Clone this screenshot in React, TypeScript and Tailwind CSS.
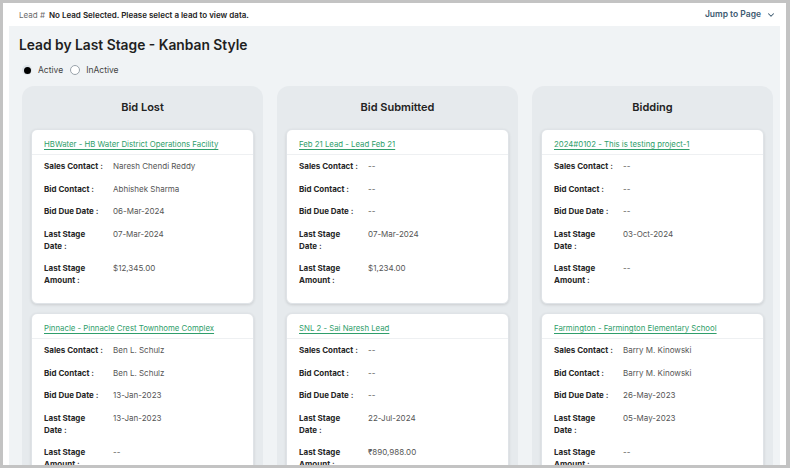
import { ChevronDown } from "lucide-react";

interface Lead {
  title: string;
  sales: string;
  bid: string;
  due: string;
  lastDate: string;
  amount: string;
}

const columns: { name: string; leads: Lead[] }[] = [
  {
    name: "Bid Lost",
    leads: [
      {
        title: "HBWater - HB Water District Operations Facility",
        sales: "Naresh Chendi Reddy",
        bid: "Abhishek Sharma",
        due: "06-Mar-2024",
        lastDate: "07-Mar-2024",
        amount: "$12,345.00",
      },
      {
        title: "Pinnacle - Pinnacle Crest Townhome Complex",
        sales: "Ben L. Schulz",
        bid: "Ben L. Schulz",
        due: "13-Jan-2023",
        lastDate: "13-Jan-2023",
        amount: "--",
      },
    ],
  },
  {
    name: "Bid Submitted",
    leads: [
      {
        title: "Feb 21 Lead - Lead Feb 21",
        sales: "--",
        bid: "--",
        due: "--",
        lastDate: "07-Mar-2024",
        amount: "$1,234.00",
      },
      {
        title: "SNL 2 - Sai Naresh Lead",
        sales: "--",
        bid: "--",
        due: "--",
        lastDate: "22-Jul-2024",
        amount: "₹890,988.00",
      },
    ],
  },
  {
    name: "Bidding",
    leads: [
      {
        title: "2024#0102 - This is testing project-1",
        sales: "--",
        bid: "--",
        due: "--",
        lastDate: "03-Oct-2024",
        amount: "--",
      },
      {
        title: "Farmington - Farmington Elementary School",
        sales: "Barry M. Kinowski",
        bid: "Barry M. Kinowski",
        due: "26-May-2023",
        lastDate: "05-May-2023",
        amount: "--",
      },
    ],
  },
];

function LeadCard({ lead }: { lead: Lead }) {
  // nbsp keeps the colon with its last word, so "Date :" wraps together
  const rows: [string, string][] = [
    ["Sales Contact\u00a0:", lead.sales],
    ["Bid Contact\u00a0:", lead.bid],
    ["Bid Due Date\u00a0:", lead.due],
    ["Last Stage Date\u00a0:", lead.lastDate],
    ["Last Stage Amount\u00a0:", lead.amount],
  ];
  return (
    <div className="bg-white rounded-[6px] border border-[#dfe3e7] shadow-[0_1px_3px_rgba(0,0,0,0.12)]">
      <div className="px-[12px] pt-[9px] pb-[5px] border-b border-[#eef0f2] text-[7.8px] leading-[10px]">
        <a className="text-[#2f9e6b] underline underline-offset-[1.5px] cursor-pointer">
          {lead.title}
        </a>
      </div>
      <div className="px-[12px] pt-[5px] pb-[17px] grid grid-cols-[62px_1fr] gap-x-[7px] gap-y-[10.5px] text-[8px] leading-[12px]">
        {rows.map(([label, value]) => (
          <div key={label} className="contents">
            <div className="font-bold text-[#262626]">{label}</div>
            <div className="text-[#555]">{value}</div>
          </div>
        ))}
      </div>
    </div>
  );
}

export default function App() {
  return (
    <div
      className="h-[468px] w-[790px] bg-[#c3c3c3] pt-[3px] pl-[3px] pr-[4px] pb-[3px] overflow-hidden"
      style={{ fontFamily: "Inter, 'Noto Sans', sans-serif" }}
    >
      <div className="h-full bg-white px-[6px] flex flex-col overflow-hidden">
        <div className="h-[23px] shrink-0 flex items-center justify-between pl-[10px] pr-[4px]">
          <div className="flex items-center gap-[4px] text-[8px]">
            <span className="text-[#6b6b6b]">Lead #</span>
            <span className="font-semibold text-[#222]">
              No Lead Selected. Please select a lead to view data.
            </span>
          </div>
          <div className="flex items-center gap-[5px] text-[8.5px] font-semibold text-[#3d5a70]">
            <span>Jump to Page</span>
            <ChevronDown size={10} strokeWidth={2.5} />
          </div>
        </div>
        <div className="flex-1 bg-[#f0f3f5] pl-[13px] pr-[7px] overflow-hidden">
          <h1 className="-ml-[3px] pt-[9px] text-[13.8px] leading-[20px] font-semibold text-[#1f1f1f]">
            Lead by Last Stage - Kanban Style
          </h1>
          <div className="mt-[9px] flex items-center text-[8.5px] text-[#444] h-[12px]">
            <span className="w-[10px] h-[10px] rounded-full bg-[#dfe5ea] flex items-center justify-center">
              <span className="w-[7px] h-[7px] rounded-full bg-black" />
            </span>
            <span className="ml-[6px]">Active</span>
            <span className="ml-[7px] w-[10px] h-[10px] rounded-full border border-[#9aa3ab] bg-white" />
            <span className="ml-[6px]">InActive</span>
          </div>
          <div className="mt-[10px] grid grid-cols-3 gap-[14px]">
            {columns.map((col) => (
              <div key={col.name} className="bg-[#e6eaed] rounded-[12px] px-[9px] pb-[9px]">
                <div className="h-[43px] flex items-center justify-center text-[11px] font-semibold text-[#222]">
                  {col.name}
                </div>
                <div className="flex flex-col gap-[9px]">
                  {col.leads.map((lead) => (
                    <LeadCard key={lead.title} lead={lead} />
                  ))}
                </div>
              </div>
            ))}
          </div>
        </div>
      </div>
    </div>
  );
}
